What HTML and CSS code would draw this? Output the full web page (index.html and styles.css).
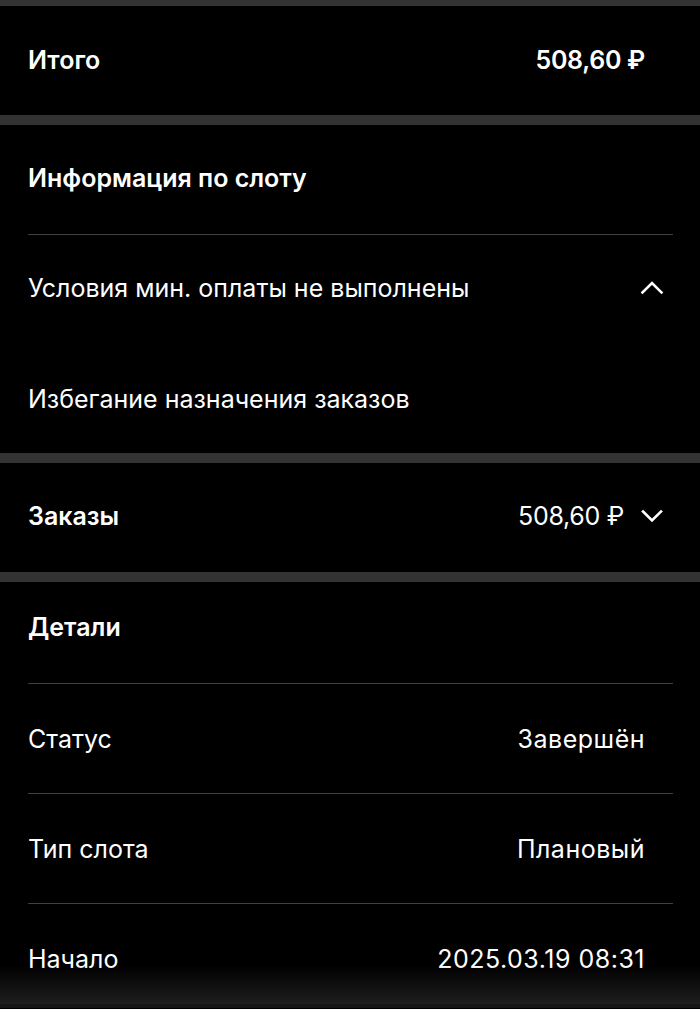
FILE: index.html
```html
<!DOCTYPE html>
<html lang="ru">
<head>
<meta charset="utf-8">
<link rel="stylesheet" href="styles.css">
</head>
<body>
<div class="page">
  <div class="band band-top"></div>
  <section class="card">
    <div class="row row-total">
      <span class="title">Итого</span>
      <span class="title money">508,60 ₽</span>
    </div>
  </section>
  <div class="band"></div>
  <section class="card">
    <div class="row row-head">
      <span class="title">Информация по слоту</span>
    </div>
    <div class="divider"></div>
    <div class="row row-chev">
      <span class="text">Условия мин. оплаты не выполнены</span>
      <svg class="chev" viewBox="0 0 24 24" width="24" height="24"><path d="M2.5 16.5 L12 7 L21.5 16.5" /></svg>
    </div>
    <div class="row">
      <span class="text">Избегание назначения заказов</span>
    </div>
  </section>
  <div class="band"></div>
  <section class="card">
    <div class="row row-chev">
      <span class="title">Заказы</span>
      <span class="right">
        <span class="text money">508,60 ₽</span>
        <svg class="chev" viewBox="0 0 24 24" width="24" height="24"><path d="M3 7.5 L12 16.5 L21 7.5" /></svg>
      </span>
    </div>
  </section>
  <div class="band"></div>
  <section class="card card-last">
    <div class="row row-head2">
      <span class="title">Детали</span>
    </div>
    <div class="divider"></div>
    <div class="row">
      <span class="text">Статус</span>
      <span class="text value">Завершён</span>
    </div>
    <div class="divider"></div>
    <div class="row">
      <span class="text">Тип слота</span>
      <span class="text value">Плановый</span>
    </div>
    <div class="divider"></div>
    <div class="row">
      <span class="text">Начало</span>
      <span class="text value">2025.03.19 08:31</span>
    </div>
    <div class="fade"></div>
  </section>
</div>
</body>
</html>
```
FILE: styles.css
```css
html, body {
  margin: 0;
  padding: 0;
  background: #000;
}
body {
  font-family: Inter, Roboto, "Noto Sans", sans-serif;
  color: #fff;
  height: 1009px;
  overflow: hidden;
}
.page {
  display: flex;
  flex-direction: column;
}
.band {
  height: 10px;
  background: #333333;
}
.band-top {
  height: 6px;
}
.card {
  display: flex;
  flex-direction: column;
}
.card-last {
  position: relative;
}
.row {
  height: 109px;
  display: flex;
  align-items: center;
  justify-content: space-between;
  padding: 0 55px 0 28px;
}
.row-total {
  padding-bottom: 2px;
  box-sizing: border-box;
}
.row-chev {
  padding-right: 36px;
  padding-bottom: 3px;
  box-sizing: border-box;
}
.row-head {
  height: 109px;
  padding-bottom: 4px;
  box-sizing: border-box;
}
.row-head2 {
  height: 101px;
  padding-bottom: 12px;
  box-sizing: border-box;
}
.divider {
  height: 1px;
  background: #404040;
  margin: 0 27px 0 28px;
}
.title {
  font-size: 25px;
  font-weight: 600;
}
.text {
  font-size: 25px;
  font-weight: 400;
}
.value {
  letter-spacing: 0.5px;
}
.money {
  letter-spacing: -0.3px;
}
.right {
  display: flex;
  align-items: center;
  gap: 16px;
}
.chev {
  display: block;
  fill: none;
  stroke: #fff;
  stroke-width: 2.6;
  stroke-linecap: square;
  stroke-linejoin: miter;
}
.fade {
  position: absolute;
  left: 0;
  right: 0;
  top: 383px;
  height: 43px;
  background: linear-gradient(to bottom, rgba(30,30,30,0) 0%, rgba(30,30,30,1) 90%, #161616 91%, #161616 100%);
  pointer-events: none;
}
```
